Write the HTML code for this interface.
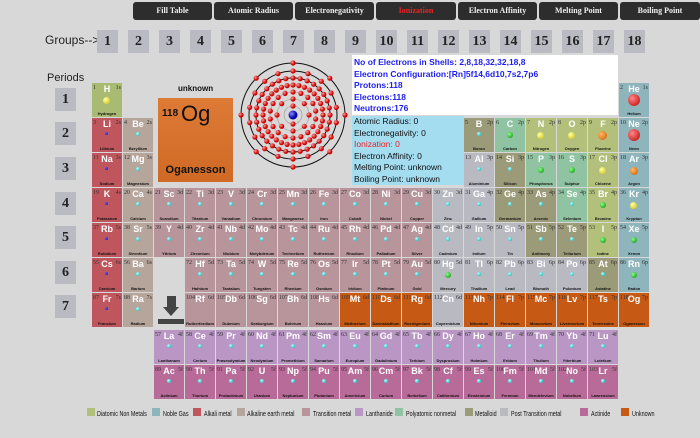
<!DOCTYPE html>
<html><head><meta charset="utf-8"><style>
body{margin:0;width:700px;height:438px;background:#d8d8d8;position:relative;overflow:hidden;font-family:"Liberation Sans",sans-serif}
.btn{position:absolute;top:2px;height:18px;background:#2d2d2d;border-radius:3px;color:#eee;font:bold 8px "Liberation Serif",serif;text-align:center;line-height:18px}
.g{position:absolute;top:30px;width:21px;height:23px;background:#b9bac2;font:bold 14px "Liberation Serif",serif;color:#222;text-align:center;line-height:23px}
.p{position:absolute;left:55px;width:21px;height:23px;background:#b9bac2;font:bold 14px "Liberation Serif",serif;color:#222;text-align:center;line-height:23px}
.c{position:absolute;width:30px;height:34px}
.c i{position:absolute;left:1px;top:2px;font:6px "Liberation Serif",serif;color:#333;font-style:normal}
.c b{position:absolute;left:0;right:0;top:1px;text-align:center;font:bold 9px "Liberation Sans",sans-serif;color:#fff}
.c u{position:absolute;right:1px;top:2px;font:6px "Liberation Serif",serif;color:#333;text-decoration:none}
.c s{position:absolute;left:13px;top:14px;width:4px;height:4px;border-radius:50%;background:radial-gradient(circle at 35% 35%,#bff,#0aa)}
.c em{position:absolute;left:0;right:0;bottom:1px;text-align:center;font:bold 4px "Liberation Sans",sans-serif;color:#111;font-style:normal;white-space:nowrap;overflow:hidden}
.am{background:#c0565d}.ae{background:#b6a59b}.tm{background:#b8959b}.pt{background:#b9b9c2}.ml{background:#9b9b79}.pn{background:#8fc3a1}.dn{background:#b2c07c}.ng{background:#8fb5bc}.la{background:#b996c4}.ac{background:#b86b98}.un{background:#c65a14}
.am s{background:radial-gradient(circle at 35% 35%,#66f,#00a);width:3px;height:3px}
.B{position:absolute;border-radius:50%}
.lg{position:absolute;top:409px;font-size:7.5px;color:#111;white-space:nowrap;transform:scaleX(.72);transform-origin:left}
.sw{position:absolute;top:408px;width:8px;height:8px}
</style></head><body>
<div class="btn" style="left:133px;width:79px">Fill Table</div>
<div class="btn" style="left:214px;width:79px">Atomic Radius</div>
<div class="btn" style="left:295px;width:79px">Electronegativity</div>
<div class="btn" style="left:376px;width:80px;color:#e22">Ionization</div>
<div class="btn" style="left:458px;width:79px">Electron Affinity</div>
<div class="btn" style="left:539px;width:79px">Melting Point</div>
<div class="btn" style="left:620px;width:80px">Boiling Point</div>

<div style="position:absolute;left:45px;top:33px;font-size:12px;color:#222">Groups--&gt;</div>
<div class="g" style="left:97px">1</div><div class="g" style="left:128px">2</div><div class="g" style="left:159px">3</div><div class="g" style="left:190px">4</div><div class="g" style="left:221px">5</div><div class="g" style="left:252px">6</div><div class="g" style="left:283px">7</div><div class="g" style="left:314px">8</div><div class="g" style="left:345px">9</div><div class="g" style="left:376px">10</div><div class="g" style="left:407px">11</div><div class="g" style="left:438px">12</div><div class="g" style="left:469px">13</div><div class="g" style="left:500px">14</div><div class="g" style="left:531px">15</div><div class="g" style="left:562px">16</div><div class="g" style="left:593px">17</div><div class="g" style="left:624px">18</div>

<div style="position:absolute;left:47px;top:72px;font-size:11px;color:#222">Periods</div>
<div class="p" style="top:88px">1</div><div class="p" style="top:122px">2</div><div class="p" style="top:157px">3</div><div class="p" style="top:192px">4</div><div class="p" style="top:226px">5</div><div class="p" style="top:261px">6</div><div class="p" style="top:295px">7</div>

<div style="position:absolute;left:178px;top:84px;font:bold 8px sans-serif;color:#111">unknown</div>
<div style="position:absolute;left:158px;top:98px;width:75px;height:84px;background:linear-gradient(#dd7a35,#cf6a25)">
<div style="position:absolute;left:4px;top:10px;font:bold 10px 'Liberation Sans';color:#111">118</div>
<div style="position:absolute;left:23px;top:3px;font:22px 'Liberation Sans';color:#111">Og</div>
<div style="position:absolute;left:0;right:0;bottom:6px;text-align:center;font:bold 11px 'Liberation Sans';color:#111">Oganesson</div></div>

<svg id="atom" style="position:absolute;left:232px;top:55px" width="122" height="122"></svg>

<div style="position:absolute;left:352px;top:55px;width:266px;height:60px;background:#fff;color:#1d1df0;font-size:8.5px;font-weight:bold;line-height:11.5px;padding:2px 0 0 2px;box-sizing:border-box">No of Electrons in Shells: 2,8,18,32,32,18,8<br>Electron Configuration:[Rn]5f14,6d10,7s2,7p6<br>Protons:118<br>Electons:118<br>Neutrons:176</div>
<div style="position:absolute;left:352px;top:116px;width:112px;height:69px;background:#a4dcf0;color:#111;font-size:8.5px;line-height:11.5px;padding:0 0 0 2px;box-sizing:border-box">Atomic Radius: 0<br>Electronegativity: 0<br><span style="color:#e22">Ionization: 0</span><br>Electron Affinity: 0<br>Melting Point: unknown<br>Boiling Point: unknown</div>

<div class="c" style="left:92px;top:83px;background:#a9bb73"><i>1</i><b>H</b><u>1s</u><s class="B" style="left:11px;top:14px;width:7px;height:7px;background:radial-gradient(circle at 35% 35%,#ffa,#cb0)"></s><em>Hydrogen</em></div>
<div class="c ng" style="left:619px;top:83px"><i>2</i><b>He</b><u>1s</u><s style="left:9px;top:11px;width:12px;height:12px;background:radial-gradient(circle at 35% 35%,#f88,#b00)"></s><em>Helium</em></div>
<div class="c am" style="left:92px;top:118px"><i>3</i><b>Li</b><u>2s</u><s></s><em>Lithium</em></div>
<div class="c ae" style="left:123px;top:118px"><i>4</i><b>Be</b><u>2s</u><s></s><em>Beryllium</em></div>
<div class="c ml" style="left:464px;top:118px"><i>5</i><b>B</b><u>2p</u><s></s><em>Boron</em></div>
<div class="c pn" style="left:495px;top:118px"><i>6</i><b>C</b><u>2p</u><s style="left:12px;width:6px;height:6px;background:radial-gradient(circle at 35% 35%,#8f8,#080)"></s><em>Carbon</em></div>
<div class="c dn" style="left:526px;top:118px"><i>7</i><b>N</b><u>2p</u><s style="left:11px;width:7px;height:7px;background:radial-gradient(circle at 35% 35%,#ffa,#cb0)"></s><em>Nitrogen</em></div>
<div class="c dn" style="left:557px;top:118px"><i>8</i><b>O</b><u>2p</u><s style="left:11px;width:7px;height:7px;background:radial-gradient(circle at 35% 35%,#ffa,#cb0)"></s><em>Oxygen</em></div>
<div class="c dn" style="left:588px;top:118px"><i>9</i><b>F</b><u>2p</u><s style="left:10px;top:13px;width:9px;height:9px;background:radial-gradient(circle at 35% 35%,#fb6,#c50)"></s><em>Fluorine</em></div>
<div class="c ng" style="left:619px;top:118px"><i>10</i><b>Ne</b><u>2p</u><s style="left:9px;top:11px;width:12px;height:12px;background:radial-gradient(circle at 35% 35%,#f88,#b00)"></s><em>Neon</em></div>
<div class="c am" style="left:92px;top:153px"><i>11</i><b>Na</b><u>3s</u><s></s><em>Sodium</em></div>
<div class="c ae" style="left:123px;top:153px"><i>12</i><b>Mg</b><u>3s</u><s></s><em>Magnesium</em></div>
<div class="c pt" style="left:464px;top:153px"><i>13</i><b>Al</b><u>3p</u><s></s><em>Aluminium</em></div>
<div class="c ml" style="left:495px;top:153px"><i>14</i><b>Si</b><u>3p</u><s></s><em>Silicon</em></div>
<div class="c pn" style="left:526px;top:153px"><i>15</i><b>P</b><u>3p</u><s style="left:12px;width:6px;height:6px;background:radial-gradient(circle at 35% 35%,#8f8,#080)"></s><em>Phosphorus</em></div>
<div class="c pn" style="left:557px;top:153px"><i>16</i><b>S</b><u>3p</u><s style="left:12px;width:6px;height:6px;background:radial-gradient(circle at 35% 35%,#8f8,#080)"></s><em>Sulphur</em></div>
<div class="c dn" style="left:588px;top:153px"><i>17</i><b>Cl</b><u>3p</u><s style="left:11px;width:7px;height:7px;background:radial-gradient(circle at 35% 35%,#ffa,#cb0)"></s><em>Chlorine</em></div>
<div class="c ng" style="left:619px;top:153px"><i>18</i><b>Ar</b><u>3p</u><s style="left:11px;width:8px;height:8px;background:radial-gradient(circle at 35% 35%,#fb6,#c50)"></s><em>Argon</em></div>
<div class="c am" style="left:92px;top:188px"><i>19</i><b>K</b><u>4s</u><s></s><em>Potassium</em></div>
<div class="c ae" style="left:123px;top:188px"><i>20</i><b>Ca</b><u>4s</u><s></s><em>Calcium</em></div>
<div class="c tm" style="left:154px;top:188px"><i>21</i><b>Sc</b><u>3d</u><s></s><em>Scandium</em></div>
<div class="c tm" style="left:185px;top:188px"><i>22</i><b>Ti</b><u>3d</u><s></s><em>Titanium</em></div>
<div class="c tm" style="left:216px;top:188px"><i>23</i><b>V</b><u>3d</u><s></s><em>Vanadium</em></div>
<div class="c tm" style="left:247px;top:188px"><i>24</i><b>Cr</b><u>3d</u><s></s><em>Chromium</em></div>
<div class="c tm" style="left:278px;top:188px"><i>25</i><b>Mn</b><u>3d</u><s></s><em>Manganese</em></div>
<div class="c tm" style="left:309px;top:188px"><i>26</i><b>Fe</b><u>3d</u><s></s><em>Iron</em></div>
<div class="c tm" style="left:340px;top:188px"><i>27</i><b>Co</b><u>3d</u><s></s><em>Cobalt</em></div>
<div class="c tm" style="left:371px;top:188px"><i>28</i><b>Ni</b><u>3d</u><s></s><em>Nickel</em></div>
<div class="c tm" style="left:402px;top:188px"><i>29</i><b>Cu</b><u>3d</u><s></s><em>Copper</em></div>
<div class="c pt" style="left:433px;top:188px"><i>30</i><b>Zn</b><u>3d</u><s></s><em>Zinc</em></div>
<div class="c pt" style="left:464px;top:188px"><i>31</i><b>Ga</b><u>4p</u><s></s><em>Gallium</em></div>
<div class="c ml" style="left:495px;top:188px"><i>32</i><b>Ge</b><u>4p</u><s></s><em>Germanium</em></div>
<div class="c ml" style="left:526px;top:188px"><i>33</i><b>As</b><u>4p</u><s></s><em>Arsenic</em></div>
<div class="c pn" style="left:557px;top:188px"><i>34</i><b>Se</b><u>4p</u><s></s><em>Selenium</em></div>
<div class="c dn" style="left:588px;top:188px"><i>35</i><b>Br</b><u>4p</u><s style="left:12px;width:6px;height:6px;background:radial-gradient(circle at 35% 35%,#8f8,#080)"></s><em>Bromine</em></div>
<div class="c ng" style="left:619px;top:188px"><i>36</i><b>Kr</b><u>4p</u><s style="left:11px;width:7px;height:7px;background:radial-gradient(circle at 35% 35%,#ffa,#cb0)"></s><em>Krypton</em></div>
<div class="c am" style="left:92px;top:223px"><i>37</i><b>Rb</b><u>5s</u><s></s><em>Rubidium</em></div>
<div class="c ae" style="left:123px;top:223px"><i>38</i><b>Sr</b><u>5s</u><s></s><em>Strontium</em></div>
<div class="c tm" style="left:154px;top:223px"><i>39</i><b>Y</b><u>4d</u><s></s><em>Yttrium</em></div>
<div class="c tm" style="left:185px;top:223px"><i>40</i><b>Zr</b><u>4d</u><s></s><em>Zirconium</em></div>
<div class="c tm" style="left:216px;top:223px"><i>41</i><b>Nb</b><u>4d</u><s></s><em>Niobium</em></div>
<div class="c tm" style="left:247px;top:223px"><i>42</i><b>Mo</b><u>4d</u><s></s><em>Molybdenum</em></div>
<div class="c tm" style="left:278px;top:223px"><i>43</i><b>Tc</b><u>4d</u><s></s><em>Technetium</em></div>
<div class="c tm" style="left:309px;top:223px"><i>44</i><b>Ru</b><u>4d</u><s></s><em>Ruthenium</em></div>
<div class="c tm" style="left:340px;top:223px"><i>45</i><b>Rh</b><u>4d</u><s></s><em>Rhodium</em></div>
<div class="c tm" style="left:371px;top:223px"><i>46</i><b>Pd</b><u>4d</u><s></s><em>Palladium</em></div>
<div class="c tm" style="left:402px;top:223px"><i>47</i><b>Ag</b><u>4d</u><s></s><em>Silver</em></div>
<div class="c pt" style="left:433px;top:223px"><i>48</i><b>Cd</b><u>4d</u><s></s><em>Cadmium</em></div>
<div class="c pt" style="left:464px;top:223px"><i>49</i><b>In</b><u>5p</u><s></s><em>Indium</em></div>
<div class="c pt" style="left:495px;top:223px"><i>50</i><b>Sn</b><u>5p</u><s></s><em>Tin</em></div>
<div class="c ml" style="left:526px;top:223px"><i>51</i><b>Sb</b><u>5p</u><s></s><em>Antimony</em></div>
<div class="c ml" style="left:557px;top:223px"><i>52</i><b>Te</b><u>5p</u><s></s><em>Tellurium</em></div>
<div class="c dn" style="left:588px;top:223px"><i>53</i><b>I</b><u>5p</u><s style="left:12px;width:6px;height:6px;background:radial-gradient(circle at 35% 35%,#8f8,#080)"></s><em>Iodine</em></div>
<div class="c ng" style="left:619px;top:223px"><i>54</i><b>Xe</b><u>5p</u><s style="left:12px;width:6px;height:6px;background:radial-gradient(circle at 35% 35%,#8f8,#080)"></s><em>Xenon</em></div>
<div class="c am" style="left:92px;top:258px"><i>55</i><b>Cs</b><u>6s</u><s></s><em>Caesium</em></div>
<div class="c ae" style="left:123px;top:258px"><i>56</i><b>Ba</b><u>6s</u><s></s><em>Barium</em></div>
<div class="c tm" style="left:185px;top:258px"><i>72</i><b>Hf</b><u>5d</u><s></s><em>Hafnium</em></div>
<div class="c tm" style="left:216px;top:258px"><i>73</i><b>Ta</b><u>5d</u><s></s><em>Tantalum</em></div>
<div class="c tm" style="left:247px;top:258px"><i>74</i><b>W</b><u>5d</u><s></s><em>Tungsten</em></div>
<div class="c tm" style="left:278px;top:258px"><i>75</i><b>Re</b><u>5d</u><s></s><em>Rhenium</em></div>
<div class="c tm" style="left:309px;top:258px"><i>76</i><b>Os</b><u>5d</u><s></s><em>Osmium</em></div>
<div class="c tm" style="left:340px;top:258px"><i>77</i><b>Ir</b><u>5d</u><s></s><em>Iridium</em></div>
<div class="c tm" style="left:371px;top:258px"><i>78</i><b>Pt</b><u>5d</u><s></s><em>Platinum</em></div>
<div class="c tm" style="left:402px;top:258px"><i>79</i><b>Au</b><u>5d</u><s></s><em>Gold</em></div>
<div class="c pt" style="left:433px;top:258px"><i>80</i><b>Hg</b><u>5d</u><s style="left:12px;width:6px;height:6px;background:radial-gradient(circle at 35% 35%,#8f8,#080)"></s><em>Mercury</em></div>
<div class="c pt" style="left:464px;top:258px"><i>81</i><b>Tl</b><u>6p</u><s></s><em>Thallium</em></div>
<div class="c pt" style="left:495px;top:258px"><i>82</i><b>Pb</b><u>6p</u><s></s><em>Lead</em></div>
<div class="c pt" style="left:526px;top:258px"><i>83</i><b>Bi</b><u>6p</u><s></s><em>Bismuth</em></div>
<div class="c pt" style="left:557px;top:258px"><i>84</i><b>Po</b><u>6p</u><s></s><em>Polonium</em></div>
<div class="c ml" style="left:588px;top:258px"><i>85</i><b>At</b><u>6p</u><s></s><em>Astatine</em></div>
<div class="c ng" style="left:619px;top:258px"><i>86</i><b>Rn</b><u>6p</u><s style="left:12px;width:6px;height:6px;background:radial-gradient(circle at 35% 35%,#8f8,#080)"></s><em>Radon</em></div>
<div class="c am" style="left:92px;top:293px"><i>87</i><b>Fr</b><u>7s</u><s></s><em>Francium</em></div>
<div class="c ae" style="left:123px;top:293px"><i>88</i><b>Ra</b><u>7s</u><s></s><em>Radium</em></div>
<div style="position:absolute;left:167px;top:296px;width:9px;height:12px;background:#444"></div>
<div style="position:absolute;left:163px;top:307px;width:0;height:0;border-left:8px solid transparent;border-right:8px solid transparent;border-top:9px solid #444"></div>
<div style="position:absolute;left:158px;top:319px;width:26px;height:5px;background:#444"></div>
<div class="c tm" style="left:185px;top:293px"><i>104</i><b>Rf</b><u>6d</u><em>Rutherfordium</em></div>
<div class="c tm" style="left:216px;top:293px"><i>105</i><b>Db</b><u>6d</u><em>Dubnium</em></div>
<div class="c tm" style="left:247px;top:293px"><i>106</i><b>Sg</b><u>6d</u><em>Seaborgium</em></div>
<div class="c tm" style="left:278px;top:293px"><i>107</i><b>Bh</b><u>6d</u><em>Bohrium</em></div>
<div class="c tm" style="left:309px;top:293px"><i>108</i><b>Hs</b><u>6d</u><em>Hassium</em></div>
<div class="c un" style="left:340px;top:293px"><i>109</i><b>Mt</b><u>6d</u><em>Meitnerium</em></div>
<div class="c un" style="left:371px;top:293px"><i>110</i><b>Ds</b><u>6d</u><em>Darmstadtium</em></div>
<div class="c un" style="left:402px;top:293px"><i>111</i><b>Rg</b><u>6d</u><em>Roentgenium</em></div>
<div class="c pt" style="left:433px;top:293px"><i>112</i><b>Cn</b><u>6d</u><em>Copernicium</em></div>
<div class="c un" style="left:464px;top:293px"><i>113</i><b>Nh</b><u>7p</u><em>Nihonium</em></div>
<div class="c un" style="left:495px;top:293px"><i>114</i><b>Fl</b><u>7p</u><em>Flerovium</em></div>
<div class="c un" style="left:526px;top:293px"><i>115</i><b>Mc</b><u>7p</u><em>Moscovium</em></div>
<div class="c un" style="left:557px;top:293px"><i>116</i><b>Lv</b><u>7p</u><em>Livermorium</em></div>
<div class="c un" style="left:588px;top:293px"><i>117</i><b>Ts</b><u>7p</u><em>Tennessine</em></div>
<div class="c un" style="left:619px;top:293px"><i>118</i><b>Og</b><u>7p</u><em>Oganesson</em></div>
<div class="c la" style="left:154px;top:330px"><i>57</i><b>La</b><u>4f</u><s></s><em>Lanthanum</em></div>
<div class="c la" style="left:185px;top:330px"><i>58</i><b>Ce</b><u>4f</u><s></s><em>Cerium</em></div>
<div class="c la" style="left:216px;top:330px"><i>59</i><b>Pr</b><u>4f</u><s></s><em>Praseodymium</em></div>
<div class="c la" style="left:247px;top:330px"><i>60</i><b>Nd</b><u>4f</u><s></s><em>Neodymium</em></div>
<div class="c la" style="left:278px;top:330px"><i>61</i><b>Pm</b><u>4f</u><s></s><em>Promethium</em></div>
<div class="c la" style="left:309px;top:330px"><i>62</i><b>Sm</b><u>4f</u><s></s><em>Samarium</em></div>
<div class="c la" style="left:340px;top:330px"><i>63</i><b>Eu</b><u>4f</u><s></s><em>Europium</em></div>
<div class="c la" style="left:371px;top:330px"><i>64</i><b>Gd</b><u>4f</u><s></s><em>Gadolinium</em></div>
<div class="c la" style="left:402px;top:330px"><i>65</i><b>Tb</b><u>4f</u><s></s><em>Terbium</em></div>
<div class="c la" style="left:433px;top:330px"><i>66</i><b>Dy</b><u>4f</u><s></s><em>Dysprosium</em></div>
<div class="c la" style="left:464px;top:330px"><i>67</i><b>Ho</b><u>4f</u><s></s><em>Holmium</em></div>
<div class="c la" style="left:495px;top:330px"><i>68</i><b>Er</b><u>4f</u><s></s><em>Erbium</em></div>
<div class="c la" style="left:526px;top:330px"><i>69</i><b>Tm</b><u>4f</u><s></s><em>Thulium</em></div>
<div class="c la" style="left:557px;top:330px"><i>70</i><b>Yb</b><u>4f</u><s></s><em>Ytterbium</em></div>
<div class="c la" style="left:588px;top:330px"><i>71</i><b>Lu</b><u>4f</u><s></s><em>Lutetium</em></div>
<div class="c ac" style="left:154px;top:365px"><i>89</i><b>Ac</b><u>5f</u><s></s><em>Actinium</em></div>
<div class="c ac" style="left:185px;top:365px"><i>90</i><b>Th</b><u>5f</u><s></s><em>Thorium</em></div>
<div class="c ac" style="left:216px;top:365px"><i>91</i><b>Pa</b><u>5f</u><s></s><em>Protactinium</em></div>
<div class="c ac" style="left:247px;top:365px"><i>92</i><b>U</b><u>5f</u><s></s><em>Uranium</em></div>
<div class="c ac" style="left:278px;top:365px"><i>93</i><b>Np</b><u>5f</u><s></s><em>Neptunium</em></div>
<div class="c ac" style="left:309px;top:365px"><i>94</i><b>Pu</b><u>5f</u><s></s><em>Plutonium</em></div>
<div class="c ac" style="left:340px;top:365px"><i>95</i><b>Am</b><u>5f</u><s></s><em>Americium</em></div>
<div class="c ac" style="left:371px;top:365px"><i>96</i><b>Cm</b><u>5f</u><s></s><em>Curium</em></div>
<div class="c ac" style="left:402px;top:365px"><i>97</i><b>Bk</b><u>5f</u><s></s><em>Berkelium</em></div>
<div class="c ac" style="left:433px;top:365px"><i>98</i><b>Cf</b><u>5f</u><s></s><em>Californium</em></div>
<div class="c ac" style="left:464px;top:365px"><i>99</i><b>Es</b><u>5f</u><s></s><em>Einsteinium</em></div>
<div class="c ac" style="left:495px;top:365px"><i>100</i><b>Fm</b><u>5f</u><s></s><em>Fermium</em></div>
<div class="c ac" style="left:526px;top:365px"><i>101</i><b>Md</b><u>5f</u><s></s><em>Mendelevium</em></div>
<div class="c ac" style="left:557px;top:365px"><i>102</i><b>No</b><u>5f</u><s></s><em>Nobelium</em></div>
<div class="c ac" style="left:588px;top:365px"><i>103</i><b>Lr</b><u>5f</u><s></s><em>Lawrencium</em></div>

<div class="sw dn" style="left:87px"></div><div class="lg" style="left:97px">Diatomic Non Metals</div>
<div class="sw ng" style="left:152px"></div><div class="lg" style="left:163px">Noble Gas</div>
<div class="sw am" style="left:193px"></div><div class="lg" style="left:204px">Alkali metal</div>
<div class="sw ae" style="left:237px"></div><div class="lg" style="left:247px">Alkaline earth metal</div>
<div class="sw tm" style="left:302px"></div><div class="lg" style="left:313px">Transition metal</div>
<div class="sw la" style="left:355px"></div><div class="lg" style="left:366px">Lanthanide</div>
<div class="sw pn" style="left:395px"></div><div class="lg" style="left:406px">Polyatomic nonmetal</div>
<div class="sw ml" style="left:465px"></div><div class="lg" style="left:475px">Metalloid</div>
<div class="sw pt" style="left:500px"></div><div class="lg" style="left:511px">Post Transition metal</div>
<div class="sw ac" style="left:580px"></div><div class="lg" style="left:591px">Actinide</div>
<div class="sw un" style="left:621px"></div><div class="lg" style="left:632px">Unknown</div>

<script>
var s=document.getElementById('atom'),cx=61,cy=60,h='';
var R=[9,16,23,30,37,44,52],N=[2,8,18,32,32,18,8];
for(var k=0;k<7;k++){h+='<circle cx="'+cx+'" cy="'+cy+'" r="'+R[k]+'" fill="none" stroke="'+(k>3?'#111':'#999')+'" stroke-width="'+(k>3?1:0.6)+'"/>';}
for(var k=0;k<7;k++){for(var j=0;j<N[k];j++){var a=2*Math.PI*j/N[k]-Math.PI/2;h+='<circle cx="'+(cx+R[k]*Math.cos(a)).toFixed(1)+'" cy="'+(cy+R[k]*Math.sin(a)).toFixed(1)+'" r="2.6" fill="url(#rg)"/>';}}
h='<defs><radialGradient id="rg" cx="35%" cy="35%"><stop offset="0" stop-color="#f99"/><stop offset="1" stop-color="#c00"/></radialGradient><radialGradient id="bg" cx="35%" cy="35%"><stop offset="0" stop-color="#88f"/><stop offset="1" stop-color="#00a"/></radialGradient></defs>'+h+'<circle cx="'+cx+'" cy="'+cy+'" r="4.5" fill="url(#bg)"/>';
s.innerHTML=h;
</script>
</body></html>
